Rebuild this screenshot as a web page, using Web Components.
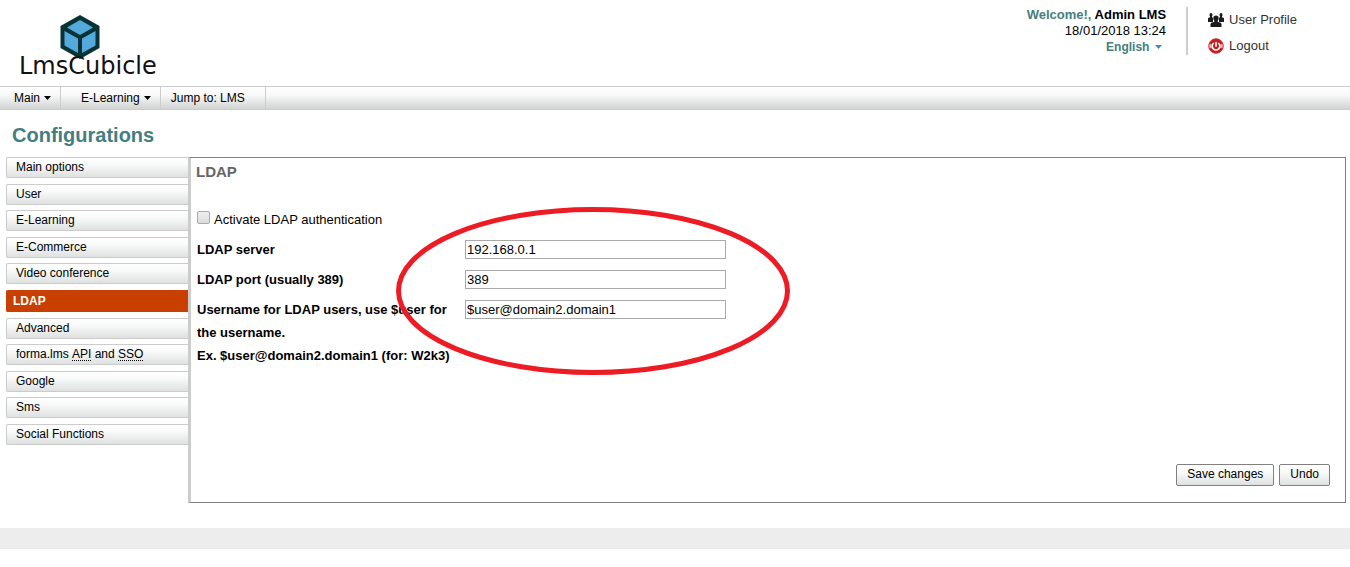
<!DOCTYPE html>
<html lang="en">
<head>
<meta charset="utf-8">
<title>Configurations</title>
<style>
  body {
    margin: 0;
    background: #fff;
    color: #000;
    font-family: "Liberation Sans", Arial, sans-serif;
    font-size: 13px;
  }
</style>
</head>
<body>
<lms-app></lms-app>

<script>
class BaseElement extends HTMLElement {
  constructor() {
    super();
    const template = document.createElement("template");
    template.innerHTML = this.constructor.markup;
    this.attachShadow({ mode: "open" });
    this.shadowRoot.appendChild(template.content.cloneNode(true));
  }
}

class LmsLogo extends BaseElement {
  static get markup() {
    return `
<style>
  :host {
    display: block;
  }
  a {
    display: flex;
    flex-direction: column;
    color: #111;
    text-decoration: none;
    font-family: "DejaVu Sans", sans-serif;
    font-size: 24px;
    line-height: 14px;
  }
  svg {
    display: block;
    margin-left: 41px;
  }
</style>
<a href="#">
  <svg width="40" height="44" viewBox="0 0 40 44" aria-hidden="true">
    <path d="M20 0 39.500 11V33L20 44 .5 33V11Z" fill="#073336"/>
    <path d="M20 5 33 12.500 20 20 7 12.500Z" fill="#55aadd"/>
    <path d="M4.500 16 18 23.500V38L4.500 30.500Z" fill="#55aadd"/>
    <path d="M35.500 16 22 23.500V38L35.500 30.500Z" fill="#55aadd"/>
  </svg>
  <span>LmsCubicle</span>
</a>`;
  }
}

class LmsUserbar extends BaseElement {
  static get markup() {
    return `
<style>
  :host {
    display: flex;
  }
  .info {
    display: flex;
    flex-direction: column;
    align-items: flex-end;
    line-height: 16px;
    padding-right: 20px;
    border-right: 2px solid #ccc;
  }
  .info b span {
    color: #457e81;
  }
  .language {
    display: flex;
    align-items: center;
    gap: 5px;
    padding-right: 4px;
  }
  select {
    appearance: none;
    margin: 0;
    padding: 0;
    border: 0;
    background: none;
    color: #457e81;
    font: bold 12px/16px "Liberation Sans", Arial, sans-serif;
    cursor: pointer;
  }
  nav {
    display: flex;
    flex-direction: column;
    gap: 10px;
    padding: 5px 0 0 20px;
  }
  nav a {
    display: flex;
    align-items: center;
    gap: 5px;
    line-height: 16px;
    color: #333;
    text-decoration: none;
  }
</style>
<div class="info">
  <b><span>Welcome!,</span> Admin LMS</b>
  <time datetime="2018-01-18T13:24">18/01/2018 13:24</time>
  <div class="language">
    <select aria-label="Language"><option>English</option></select>
    <svg width="7" height="4" aria-hidden="true"><path d="M0 0H7L3.500 4Z" fill="#4f81bd"/></svg>
  </div>
</div>
<nav>
  <a href="#">
    <svg width="16" height="16" viewBox="0 0 16 16" fill="#1c1c1c" aria-hidden="true">
      <path d="M1.500 2.500Q1.500 1 3 1T4.500 2.500Q4.500 4 4 4.500V5.500H5V10H0V6.500Q0 5.500 2 5.200V4.500Q1.500 4 1.500 2.500Z"/>
      <path d="M11.500 2.500Q11.500 1 13 1T14.500 2.500Q14.500 4 14 4.500V5.200Q16 5.500 16 6.500V10H11V5.500H12V4.500Q11.500 4 11.500 2.500Z"/>
      <path d="M5.300 6Q5.300 3.500 8 3.500T10.700 6Q10.700 8 9.700 9V10Q13.500 10 13.500 12.500V15H2.500V12.500Q2.500 10 6.300 10V9Q5.300 8 5.300 6Z"/>
    </svg>
    User Profile
  </a>
  <a href="#">
    <svg width="16" height="16" viewBox="0 0 16 16" aria-hidden="true">
      <circle cx="8" cy="8" r="7.500" fill="#cc1a1c"/>
      <path d="M1.500 5.500A7 7 0 0 0 1.500 10.500L3.500 9.500V6.500Z" fill="#f2b5b5"/>
      <path d="M14.500 5.500A7 7 0 0 1 14.500 10.500L12.500 9.500V6.500Z" fill="#f2b5b5"/>
      <circle cx="8" cy="8" r="7.300" fill="none" stroke="#c04a4a" stroke-width=".8"/>
      <path d="M5.300 5.500A3.800 3.800 0 1 0 10.700 5.500M8 4.500V8" fill="none" stroke="#fff" stroke-width="1.700" stroke-linecap="round"/>
    </svg>
    Logout
  </a>
</nav>`;
  }
}

class LmsMenubar extends BaseElement {
  static get markup() {
    return `
<style>
  :host {
    display: flex;
    height: 22px;
    border-top: 1px solid #ccc;
    border-bottom: 1px solid #ccc;
    background: linear-gradient(#fff, #f8f9f9 35%, #d2d3d3);
  }
  button, a {
    display: flex;
    align-items: center;
    gap: 4px;
    box-sizing: border-box;
    margin: 0;
    padding: 0 9px 0 20px;
    border: 0;
    border-right: 1px solid #ccc;
    background: none;
    color: #000;
    font: 12px/22px "Liberation Sans", Arial, sans-serif;
    text-decoration: none;
    white-space: nowrap;
    cursor: pointer;
  }
  button:first-of-type {
    padding-left: 14px;
  }
  a {
    padding: 0 20px 0 10px;
  }
</style>
<button type="button">Main <svg width="7" height="4" aria-hidden="true"><path d="M0 0H7L3.500 4Z"/></svg></button>
<button type="button">E-Learning <svg width="7" height="4" aria-hidden="true"><path d="M0 0H7L3.500 4Z"/></svg></button>
<a href="#">Jump to: LMS</a>`;
  }
}

class LmsTab extends BaseElement {
  static get markup() {
    return `
<style>
  :host {
    display: block;
  }
  a {
    display: block;
    box-sizing: border-box;
    height: 21px;
    padding-left: 9px;
    border: 1px solid #ccc;
    border-right: 0;
    border-radius: 2px 0 0 2px;
    background: linear-gradient(#fff, #f8f9f9 35%, #dfe0e0);
    color: #000;
    font-size: 12px;
    line-height: 18px;
    text-decoration: none;
  }
  :host([active]) a {
    height: 22px;
    padding-left: 6px;
    border-color: #c83f00;
    background: #c83f00;
    color: #fff;
    font-weight: bold;
    line-height: 20px;
  }
</style>
<a href="#"><slot></slot></a>`;
  }
}

class LmsTabs extends BaseElement {
  static get markup() {
    return `
<style>
  :host {
    display: flex;
    flex-direction: column;
    justify-content: space-between;
    min-height: 288px;
  }
  abbr {
    text-decoration: none;
    border-bottom: 1px dotted #000;
    display: inline-block;
    line-height: 12px;
  }
</style>
<lms-tab>Main options</lms-tab>
<lms-tab>User</lms-tab>
<lms-tab>E-Learning</lms-tab>
<lms-tab>E-Commerce</lms-tab>
<lms-tab>Video conference</lms-tab>
<lms-tab active>LDAP</lms-tab>
<lms-tab>Advanced</lms-tab>
<lms-tab>forma.lms <abbr>API</abbr> and <abbr>SSO</abbr></lms-tab>
<lms-tab>Google</lms-tab>
<lms-tab>Sms</lms-tab>
<lms-tab>Social Functions</lms-tab>`;
  }
}

class LmsField extends BaseElement {
  static get markup() {
    return `
<style>
  :host {
    display: grid;
    grid-template-columns: 260px 261px;
    column-gap: 8px;
    align-items: start;
  }
  label {
    font-weight: bold;
    line-height: 23px;
  }
  input {
    box-sizing: border-box;
    width: 100%;
    height: 19px;
    margin: 2px 0 0;
    padding: 0 1px;
    border: 1px solid #a9a9a9;
    background: #fff;
    color: #000;
    font: 13px "Liberation Sans", Arial, sans-serif;
  }
</style>
<label for="field"><slot></slot></label>
<input id="field" type="text">`;
  }

  static get observedAttributes() {
    return ["name", "value"];
  }

  attributeChangedCallback(name, _, newValue) {
    this.shadowRoot.querySelector("input")[name] = newValue;
  }
}

class LmsButton extends BaseElement {
  static get markup() {
    return `
<style>
  :host {
    display: block;
  }
  button {
    height: 22px;
    margin: 0;
    padding: 0 10px 2px;
    border: 1px solid #808080;
    border-radius: 2px;
    background: linear-gradient(#fff, #f8f9f9 40%, #dfe0e0);
    color: #000;
    font: 12px "Liberation Sans", Arial, sans-serif;
    cursor: pointer;
  }
</style>
<button type="button"><slot></slot></button>`;
  }
}

// Red ring that sits over the fields
class LmsHighlight extends BaseElement {
  static get markup() {
    return `
<style>
  :host {
    display: block;
    width: 394px;
    height: 168px;
    pointer-events: none;
  }
  svg {
    display: block;
  }
</style>
<svg width="394" height="168" aria-hidden="true">
  <ellipse cx="197" cy="84" rx="194.500" ry="81.500" fill="none" stroke="#ed1c24" stroke-width="5"/>
</svg>`;
  }
}

class LdapPanel extends BaseElement {
  static get markup() {
    return `
<style>
  :host {
    display: flex;
    flex-direction: column;
    box-sizing: border-box;
    min-height: 346px;
    position: relative;
    padding: 5px 15px 16px 5px;
    border: 1px solid #808080;
    border-left: 3px solid #ccc;
  }
  h2 {
    margin: 0;
    color: #666;
    font-size: 15px;
    line-height: 18px;
  }
  form {
    display: flex;
    flex: 1;
    flex-direction: column;
    gap: 7px;
    padding: 27px 0 0 1px;
  }
  .check {
    display: flex;
    align-items: center;
    gap: 4px;
    line-height: 23px;
  }
  .check input {
    appearance: none;
    box-sizing: border-box;
    width: 13px;
    height: 13px;
    margin: 0 0 4px;
    border: 1px solid #aaa;
    border-radius: 2px;
    background: linear-gradient(#eee, #ddd);
  }
  .check input:checked {
    background: #666;
  }
  .actions {
    display: flex;
    justify-content: flex-end;
    gap: 5px;
    margin-top: auto;
  }
  lms-highlight {
    position: absolute;
    left: 205px;
    top: 49px;
  }
</style>
<h2>LDAP</h2>
<form>
  <div class="check">
    <input id="ldap_used" type="checkbox">
    <label for="ldap_used">Activate LDAP authentication</label>
  </div>
  <lms-field name="ldap_server" value="192.168.0.1">LDAP server</lms-field>
  <lms-field name="ldap_port" value="389">LDAP port (usually 389)</lms-field>
  <lms-field name="ldap_user" value="$user@domain2.domain1">Username for LDAP users, use $user for the username.<br>Ex. $user@domain2.domain1 (for: W2k3)</lms-field>
  <div class="actions">
    <lms-button>Save changes</lms-button>
    <lms-button>Undo</lms-button>
  </div>
</form>
<lms-highlight></lms-highlight>`;
  }
}

class LmsApp extends BaseElement {
  static get markup() {
    return `
<style>
  :host {
    display: block;
  }
  header {
    display: flex;
    justify-content: space-between;
    align-items: flex-start;
    box-sizing: border-box;
    min-height: 86px;
    padding: 7px 53px 0 19px;
  }
  lms-logo {
    padding-top: 8px;
  }
  h1 {
    margin: 0;
    padding: 13px 12px 10px;
    color: #457e81;
    font-size: 20px;
    line-height: 24px;
  }
  main {
    display: grid;
    grid-template-columns: 182px 1fr;
    align-items: start;
    padding: 0 4px 0 6px;
  }
  footer {
    height: 21px;
    margin-top: 25px;
    background: #ededed;
  }
</style>
<header>
  <lms-logo></lms-logo>
  <lms-userbar></lms-userbar>
</header>
<lms-menubar></lms-menubar>
<h1>Configurations</h1>
<main>
  <lms-tabs></lms-tabs>
  <ldap-panel></ldap-panel>
</main>
<footer></footer>`;
  }
}

customElements.define("lms-logo", LmsLogo);
customElements.define("lms-userbar", LmsUserbar);
customElements.define("lms-menubar", LmsMenubar);
customElements.define("lms-tab", LmsTab);
customElements.define("lms-tabs", LmsTabs);
customElements.define("lms-field", LmsField);
customElements.define("lms-button", LmsButton);
customElements.define("lms-highlight", LmsHighlight);
customElements.define("ldap-panel", LdapPanel);
customElements.define("lms-app", LmsApp);
</script>
</body>
</html>
